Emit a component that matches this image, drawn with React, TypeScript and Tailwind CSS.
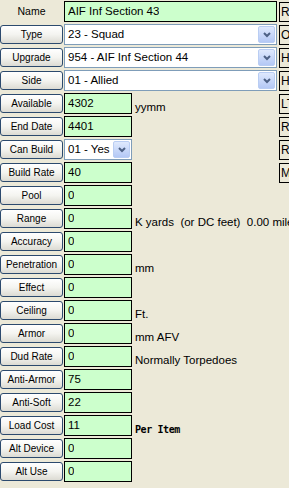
import React from 'react';

type Row = {
  label: string;
  kind: 'text' | 'select' | 'plain';
  value: string;
  width?: 'full' | 'short';
  unit?: string;
  unitStyle?: 'comic' | 'mono';
};

const rows: Row[] = [
  { label: 'Name', kind: 'plain', value: 'AIF Inf Section 43', width: 'full' },
  { label: 'Type', kind: 'select', value: '23 - Squad', width: 'full' },
  { label: 'Upgrade', kind: 'select', value: '954 - AIF Inf Section 44', width: 'full' },
  { label: 'Side', kind: 'select', value: '01 - Allied', width: 'full' },
  { label: 'Available', kind: 'text', value: '4302', unit: 'yymm' },
  { label: 'End Date', kind: 'text', value: '4401' },
  { label: 'Can Build', kind: 'select', value: '01 - Yes', width: 'short' },
  { label: 'Build Rate', kind: 'text', value: '40' },
  { label: 'Pool', kind: 'text', value: '0' },
  { label: 'Range', kind: 'text', value: '0', unit: 'K yards  (or DC feet)  0.00 miles' },
  { label: 'Accuracy', kind: 'text', value: '0' },
  { label: 'Penetration', kind: 'text', value: '0', unit: 'mm' },
  { label: 'Effect', kind: 'text', value: '0' },
  { label: 'Ceiling', kind: 'text', value: '0', unit: 'Ft.' },
  { label: 'Armor', kind: 'text', value: '0', unit: 'mm AFV' },
  { label: 'Dud Rate', kind: 'text', value: '0', unit: 'Normally Torpedoes' },
  { label: 'Anti-Armor', kind: 'text', value: '75' },
  { label: 'Anti-Soft', kind: 'text', value: '22' },
  { label: 'Load Cost', kind: 'text', value: '11', unit: 'Per Item', unitStyle: 'mono' },
  { label: 'Alt Device', kind: 'text', value: '0' },
  { label: 'Alt Use', kind: 'text', value: '0' },
];

const sideBoxes = ['Ro', 'Or', 'Hi', 'Hi', 'LT', 'Re', 'Re', 'Ma'];

function Chevron() {
  return (
    <div className="flex h-full w-[17px] shrink-0 items-center justify-center rounded-[2px] border border-[#b9cdf3] bg-gradient-to-b from-[#dfe9fd] to-[#b4c8f5]">
      <svg width="8" height="6" viewBox="0 0 8 6">
        <path d="M1 1 L4 4 L7 1" fill="none" stroke="#4d6185" strokeWidth="2" />
      </svg>
    </div>
  );
}

function Field({ row }: { row: Row }) {
  const w = row.width === 'full' ? 'w-[213px]' : 'w-[68px]';
  if (row.kind === 'select') {
    return (
      <div className={`${w} flex h-[21px] shrink-0 items-center border border-[#7f9db9] bg-white pl-[3px] pr-[1px] py-[1px]`}>
        <span className="flex-1 overflow-hidden whitespace-nowrap text-[11.5px] text-black">{row.value}</span>
        <Chevron />
      </div>
    );
  }
  return (
    <div className={`${w} flex h-[21px] shrink-0 items-center border border-black bg-[#ccffcc] px-[3px]`}>
      <span className="overflow-hidden whitespace-nowrap text-[11.5px] leading-none text-black">{row.value}</span>
    </div>
  );
}

export default function App() {
  return (
    <div
      className="relative h-[488px] w-[289px] overflow-hidden bg-[#ece9d8]"
      style={{ fontFamily: '"Liberation Sans", Arial, sans-serif' }}
    >
      <div className="flex pt-[1px]">
        <div className="flex w-[278px] shrink-0 flex-col gap-[2px]">
          {rows.map((row) => (
            <div key={row.label} className="flex h-[21px] items-center">
              {row.kind === 'plain' ? (
                <div className="flex w-[63px] shrink-0 items-center justify-center text-[10.5px] text-black">
                  {row.label}
                </div>
              ) : (
                <div className="flex h-[19px] w-[63px] shrink-0 items-center justify-center rounded-[3px] border border-[#2c4a6e] bg-gradient-to-b from-white via-[#f4f4f0] to-[#dcdbd3] text-[10px] text-black">
                  {row.label}
                </div>
              )}
              <div className="ml-[1px]">
                <Field row={row} />
              </div>
              {row.unit && (
                <div
                  className={`ml-[3px] self-end whitespace-pre pb-[1px] leading-none text-black ${
                    row.unitStyle === 'mono'
                      ? 'text-[10px] font-bold tracking-[-0.4px]'
                      : 'text-[11.5px]'
                  }`}
                  style={{
                    fontFamily:
                      row.unitStyle === 'mono'
                        ? '"DejaVu Sans Mono", monospace'
                        : '"Liberation Sans", sans-serif',
                  }}
                >
                  {row.unit}
                </div>
              )}
            </div>
          ))}
        </div>
        <div className="ml-[1px] flex flex-col gap-[3px] pt-[1px]">
          {sideBoxes.map((t, i) => (
            <div
              key={i}
              className="flex h-[20px] w-[40px] items-center border border-black bg-[#ece9d8] pl-[1px] text-[12px] text-black"
            >
              {t}
            </div>
          ))}
        </div>
      </div>
    </div>
  );
}
